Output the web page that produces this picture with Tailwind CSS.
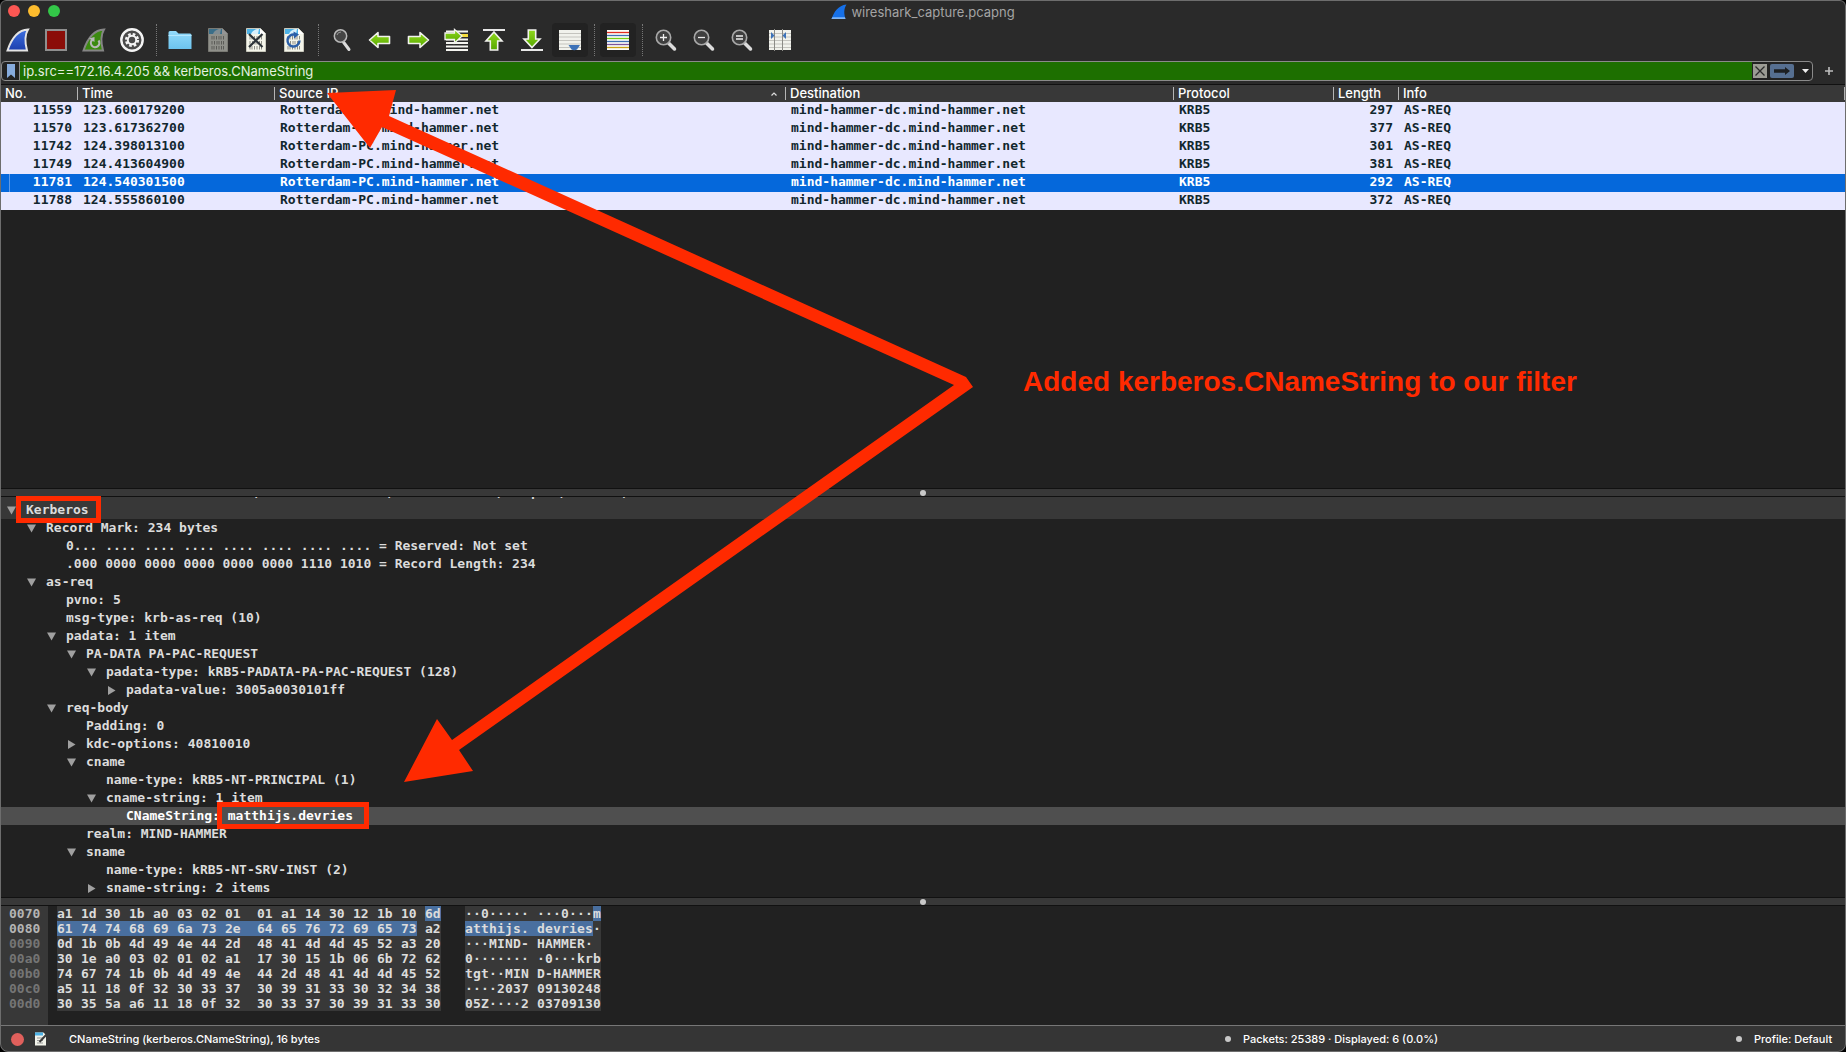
<!DOCTYPE html>
<html lang="en">
<head>
<meta charset="utf-8">
<title>wireshark_capture.pcapng</title>
<script src="https://cdn.jsdelivr.net/npm/@tailwindcss/browser@4"></script>
</head>
<body class="bg-black font-['Inter',sans-serif] text-[13px] leading-[18px] text-white">
<svg class="absolute size-0" aria-hidden="true">
  <defs>
    <linearGradient id="blue" x1="0" y1="0" x2="0" y2="1"><stop offset="0" stop-color="#3d6fe0"/><stop offset="1" stop-color="#1c3fae"/></linearGradient>
    <linearGradient id="lime" x1="0" y1="0" x2="0" y2="1"><stop offset="0" stop-color="#8fd81c"/><stop offset="1" stop-color="#57a800"/></linearGradient>
    <linearGradient id="folder" x1="0" y1="0" x2="0" y2="1"><stop offset="0" stop-color="#93dbfb"/><stop offset="1" stop-color="#6cc3ee"/></linearGradient>
    <symbol id="page" viewBox="0 0 24 24">
      <path d="M2.500 0.500h14L21.500 5.500V23.500h-19z" fill="#f4f5ea" stroke="#c9c9bd"/>
      <path d="M3 1h13.500v5H3z" fill="#4db2e6"/><path d="M7 6c1-3 4-5 8-5l-1 5z" fill="#d8f0fb"/>
      <path d="M16 0.500V6h5.500z" fill="#fff"/>
      <g fill="none" stroke="#8d8d85" stroke-width="1"><path d="M6 8v3.500M8 8v3.500M10.500 8v3.500M13 8v3.500M15 8v3.500M17.500 8v3.500M6 13v3.500M8.500 13v3.500M11 13v3.500M13 13v3.500M15.500 13v3.500M17.500 13v3.500M6 18v3.500M8 18v3.500M10.500 18v3.500M13 18v3.500M15.500 18v3.500M17.500 18v3.500"/></g>
    </symbol>
    <symbol id="lens" viewBox="0 0 24 24">
      <path d="M14 14.500l6.500 6.500" stroke="#dcdcdc" stroke-width="3.500" stroke-linecap="round"/>
      <circle cx="9.500" cy="9.500" r="7.200" fill="#3f3f3f" stroke="#a9a9a9" stroke-width="1.600"/>
    </symbol>
    <symbol id="arrow" viewBox="0 0 24 24">
      <path d="M1.500 12L10 4.500V8.500h11.500v7H10v4z" fill="url(#lime)" stroke="#f2f2ee" stroke-width="1.600" stroke-linejoin="round"/>
    </symbol>
  </defs>
</svg>

<div class="relative flex min-h-screen flex-col overflow-hidden rounded-b-lg rounded-t-md bg-[#2a2a2a]">

  <header class="relative flex h-6 items-center justify-center">
    <div class="absolute left-2 top-[5px] flex gap-2">
      <button aria-label="Close" class="size-3 rounded-full bg-[#fc5753]"></button>
      <button aria-label="Minimize" class="size-3 rounded-full bg-[#fdbc2e]"></button>
      <button aria-label="Zoom" class="size-3 rounded-full bg-[#33c748]"></button>
    </div>
    <svg class="mr-1 size-4" viewBox="0 0 16 16"><path d="M0.500 15C3 8 7 1.500 15.500 0.500 12.500 5 13 10 14.500 15z" fill="#1670e8"/><path d="M0.500 15h14l-.5-1.800H1.300z" fill="#7db4f7"/></svg>
    <h1 class="text-[#a4a4a4]">wireshark_capture.pcapng</h1>
  </header>

  <nav aria-label="Main toolbar" class="mb-[5px] flex h-8 items-center gap-0.5">
    <button aria-label="Start capture" class="flex h-[34px] w-9 items-center justify-center"><svg class="size-6" viewBox="0 0 24 24"><path d="M1.500 22.500C5 12 11 2 22 1.500 18 8 19 15 21 22.500z" fill="url(#blue)" stroke="#e4e4e4" stroke-width="2"/></svg></button>
    <button aria-label="Stop capture" class="flex h-[34px] w-9 items-center justify-center"><svg class="size-6" viewBox="0 0 24 24"><path d="M2 2h20v20H2z" fill="#8b0d08" stroke="#8f8f8f" stroke-width="2"/></svg></button>
    <button aria-label="Restart capture" class="flex h-[34px] w-9 items-center justify-center"><svg class="size-6" viewBox="0 0 24 24"><path d="M1.500 22.500C5 12 11 2 22 1.500 18 8 19 15 21 22.500z" fill="#3c8a10" stroke="#858585" stroke-width="2"/><path d="M16.500 12.500a4.200 4.200 0 1 1-6-.8" fill="none" stroke="#b9b9b9" stroke-width="2.200"/><path d="M7 10.500l5.500-1.500v5z" fill="#b9b9b9"/></svg></button>
    <button aria-label="Capture options" class="flex h-[34px] w-9 items-center justify-center"><svg class="size-6" viewBox="0 0 24 24"><circle cx="12" cy="12" r="10.700" fill="#4b4b4b" stroke="#f4f4f4" stroke-width="2.400"/><circle cx="12" cy="12" r="5.800" fill="none" stroke="#f4f4f4" stroke-width="2.600" stroke-dasharray="2.600 1.955"/><circle cx="12" cy="12" r="4.200" fill="#4b4b4b" stroke="#f4f4f4" stroke-width="2"/></svg></button>
    <div class="flex w-2 justify-center"><span class="h-8 border-l border-dotted border-[#777]"></span></div>
    <button aria-label="Open" class="flex h-[34px] w-9 items-center justify-center"><svg class="size-6" viewBox="0 0 24 24"><path d="M0.500 4.500q0-1.500 1.500-1.500h6l2.500 2.500H22q1.500 0 1.500 1.500v14H.5z" fill="url(#folder)"/><path d="M.5 7.500h23" stroke="#b4e8ff"/></svg></button>
    <button aria-label="Save" class="flex h-[34px] w-9 items-center justify-center opacity-50"><svg class="size-6"><use href="#page"/></svg></button>
    <button aria-label="Close file" class="flex h-[34px] w-9 items-center justify-center"><svg class="size-6" viewBox="0 0 24 24"><use href="#page"/><path d="M5 6l13.500 13M18.500 6L5 19" stroke="#2c3338" stroke-width="2.200"/></svg></button>
    <button aria-label="Reload" class="flex h-[34px] w-9 items-center justify-center"><svg class="size-6" viewBox="0 0 24 24"><use href="#page"/><path d="M17.500 12.500a6 6 0 1 1-4.500-5.800" fill="none" stroke="#2b5fa8" stroke-width="2.400"/><path d="M11.500 3.500l5.500 3-5 4z" fill="#2b5fa8"/></svg></button>
    <div class="flex w-2 justify-center"><span class="h-8 border-l border-dotted border-[#777]"></span></div>
    <button aria-label="Find packet" class="flex h-[34px] w-9 items-center justify-center"><svg class="size-6" viewBox="0 0 24 24"><path d="M13 13.500l6 8" stroke="#dcdcdc" stroke-width="3" stroke-linecap="round"/><circle cx="10.500" cy="8" r="6.200" fill="#454545" stroke="#b9b9b9" stroke-width="1.500"/><path d="M7 7a4 4 0 0 1 4-3" fill="none" stroke="#999"/></svg></button>
    <button aria-label="Previous packet" class="flex h-[34px] w-9 items-center justify-center"><svg class="size-6"><use href="#arrow"/></svg></button>
    <button aria-label="Next packet" class="flex h-[34px] w-9 items-center justify-center"><svg class="size-6 -scale-x-100"><use href="#arrow"/></svg></button>
    <button aria-label="Go to packet" class="flex h-[34px] w-9 items-center justify-center"><svg class="size-6" viewBox="0 0 24 24"><path d="M2 3.500h22M2 11.500h22M2 15h22M2 18.500h22M2 22h22" stroke="#f4f4f0" stroke-width="1.900"/><path d="M16 6h8v3h-8z" fill="#f6de3c"/><path d="M18 8L10.500 1.500V5H1v6.500h9.500V15z" fill="url(#lime)" stroke="#f2f2ee" stroke-width="1.300"/></svg></button>
    <button aria-label="First packet" class="flex h-[34px] w-9 items-center justify-center"><svg class="size-6" viewBox="0 0 24 24"><path d="M1 2h22" stroke="#e8e8e8" stroke-width="2"/><path d="M12 4l8 9h-4.300v9H8.300v-9H4z" fill="url(#lime)" stroke="#f2f2ee" stroke-width="1.600"/></svg></button>
    <button aria-label="Last packet" class="flex h-[34px] w-9 items-center justify-center"><svg class="size-6" viewBox="0 0 24 24"><path d="M1 22h22" stroke="#e8e8e8" stroke-width="2"/><path d="M12 19.500l8-8.500h-4.300V2H8.300v9H4z" fill="url(#lime)" stroke="#f2f2ee" stroke-width="1.600"/></svg></button>
    <button aria-label="Auto scroll" aria-pressed="true" class="flex h-[34px] w-9 items-center justify-center rounded-sm bg-[#222]"><svg class="size-6" viewBox="0 0 24 24"><path d="M1 2h22v20H1z" fill="#f1f2ec"/><path d="M1 5.500h22M1 9h22M1 12.500h22M1 16h22M1 19.500h22" stroke="#c4c4be"/><path d="M10.500 17h11.500l-3 4.500q-2.700 1.500-5.500 0z" fill="#3c72b8"/></svg></button>
    <div class="flex w-2 justify-center"><span class="h-8 border-l border-dotted border-[#777]"></span></div>
    <button aria-label="Colorize" aria-pressed="true" class="flex h-[34px] w-9 items-center justify-center rounded-sm bg-[#222]"><svg class="size-6" viewBox="0 0 24 24"><path d="M1 2h22v20H1z" fill="#fbfbf6"/><g stroke-width="1.300"><path d="M1 4.500h22" stroke="#e22c20"/><path d="M1 7.500h22" stroke="#3d6fb4"/><path d="M1 10.500h22" stroke="#74cc14"/><path d="M1 13.500h22" stroke="#3d6fb4"/><path d="M1 16.500h22" stroke="#7c549c"/><path d="M1 19.500h22" stroke="#c9a014"/></g></svg></button>
    <div class="flex w-2 justify-center"><span class="h-8 border-l border-dotted border-[#777]"></span></div>
    <button aria-label="Zoom in" class="flex h-[34px] w-9 items-center justify-center"><svg class="size-6" viewBox="0 0 24 24"><use href="#lens"/><path d="M6 9.500h7M9.500 6v7" stroke="#eee" stroke-width="1.300"/></svg></button>
    <button aria-label="Zoom out" class="flex h-[34px] w-9 items-center justify-center"><svg class="size-6" viewBox="0 0 24 24"><use href="#lens"/><path d="M6 9.500h7" stroke="#eee" stroke-width="1.300"/></svg></button>
    <button aria-label="Normal size" class="flex h-[34px] w-9 items-center justify-center"><svg class="size-6" viewBox="0 0 24 24"><use href="#lens"/><path d="M6 8h7M6 11h7" stroke="#eee" stroke-width="1.300"/></svg></button>
    <button aria-label="Resize columns" class="flex h-[34px] w-9 items-center justify-center"><svg class="size-6" viewBox="0 0 24 24"><path d="M1 2h22v20H1z" fill="#f1f2ec"/><path d="M1 5.500h22M1 9h22M1 12.500h22M1 16h22M1 19.500h22" stroke="#c4c4be"/><path d="M6.500 1v22M14.500 1v22" stroke="#8b8b86"/><path d="M3 4l3.500 3.500L3 11zM18 4l-3.500 3.500L18 11z" fill="#3c72b8"/></svg></button>
  </nav>

  <form class="flex h-5 items-center pl-px pr-2" onsubmit="return false">
    <div class="flex h-5 flex-1 items-stretch overflow-hidden rounded-sm border border-[#8a8a8a] bg-[#222]">
      <button type="button" aria-label="Filter bookmarks" class="flex w-[18px] items-center justify-center border-r border-[#8a8a8a]"><svg class="h-3.5 w-2" viewBox="0 0 8 14"><path d="M0 0h8v14L4 10.500 0 14z" fill="#86abdc"/></svg></button>
      <input aria-label="Display filter" value="ip.src==172.16.4.205 &amp;&amp; kerberos.CNameString" class="min-w-0 flex-1 bg-[#1d6f00] px-[3px] text-[13px] text-[#e4efe0] outline-none">
      <div class="flex items-center pr-[3px]">
        <button type="button" aria-label="Clear filter" class="ml-px size-[14px] bg-[#9b9b94]"><svg class="size-[14px]" viewBox="0 0 14 14"><path d="M2.500 2.500l9 9M11.500 2.500l-9 9" stroke="#2a2a2a" stroke-width="1.300"/></svg></button>
        <button type="submit" aria-label="Apply filter" class="ml-[3px] h-[14px] w-6 rounded-[2px] bg-[#566f91]"><svg class="h-[14px] w-6" viewBox="0 0 24 14"><path d="M4 5.200h11V3l5 4-5 4V8.800H4z" fill="#1d1f22"/></svg></button>
        <button type="button" aria-label="Filter history" class="flex h-[14px] w-[15px] items-center justify-end"><svg class="h-1 w-[7px]" viewBox="0 0 7 4"><path d="M0 0h7L3.500 4z" fill="#eee"/></svg></button>
      </div>
    </div>
    <button type="button" aria-label="Add filter button" class="ml-2.5 mr-[3px] flex w-3 justify-center"><svg class="size-2" viewBox="0 0 8 8"><path d="M0 4h8M4 0v8" stroke="#bdbdbd" stroke-width="1.600"/></svg></button>
  </form>

  <main class="mt-[3px] flex flex-1 flex-col border-t border-[#111]">
    <section aria-label="Packet list" class="flex-1 bg-[#212121]">
      <table class="w-full table-fixed border-collapse">
        <colgroup><col class="w-[77px]"><col class="w-[197px]"><col class="w-[511px]"><col class="w-[388px]"><col class="w-[160px]"><col class="w-[65px]"><col></colgroup>
        <thead>
          <tr class="h-[17px] bg-[#383838] text-left leading-[13px]">
            <th class="p-0 pl-[5px] font-medium">No.</th>
            <th class="p-0 font-medium"><div class="border-l border-[#b5b5b5] pl-1">Time</div></th>
            <th class="p-0 font-medium"><div class="flex items-center justify-between border-l border-[#b5b5b5] pl-1 pr-2">Source IP<svg class="h-1 w-1.5" viewBox="0 0 6 4"><path d="M.5 3.500L3 1l2.500 2.500" fill="none" stroke="#ddd" stroke-width="1.200"/></svg></div></th>
            <th class="p-0 font-medium"><div class="border-l border-[#b5b5b5] pl-1">Destination</div></th>
            <th class="p-0 font-medium"><div class="border-l border-[#b5b5b5] pl-1">Protocol</div></th>
            <th class="p-0 font-medium"><div class="border-l border-[#b5b5b5] pl-1">Length</div></th>
            <th class="p-0 pr-px font-medium"><div class="border-x border-[#b5b5b5] pl-1">Info</div></th>
          </tr>
        </thead>
        <tbody id="packets" class="bg-[#e8e8ff] font-['DejaVu_Sans_Mono',monospace] font-bold leading-4 text-[#12272e]"></tbody>
      </table>
    </section>

    <div class="flex h-[9px] items-center justify-center border-y border-[#111] bg-[#383838]"><span class="size-1.5 rounded-full bg-[#c8c8c8]"></span></div>

    <section aria-label="Packet details" class="bg-[#212121] font-['DejaVu_Sans_Mono',monospace] font-bold text-[#dcdcdc]">
      <div class="flex h-1 items-end overflow-hidden whitespace-pre bg-[#383838] pl-[26px]">Transmission Control Protocol, Src Port: 49187, Dst Port: 88, Seq: 1, Ack: 1, Len: 238</div>
      <ul id="tree"></ul>
    </section>

    <div class="flex h-[9px] items-center justify-center border-y border-[#111] bg-[#383838]"><span class="size-1.5 rounded-full bg-[#c8c8c8]"></span></div>

    <section aria-label="Packet bytes" class="flex bg-[#212121] font-['DejaVu_Sans_Mono',monospace] font-bold leading-[15px] text-[#dcdcdc]">
      <table class="border-collapse"><tbody id="bytes"></tbody></table>
    </section>
  </main>

  <footer class="flex h-[27px] items-center border-t border-[#777] bg-[#353535] pl-[11px] pr-[14px] text-[11px] font-medium">
    <button aria-label="Expert information" class="size-[13px] rounded-full bg-[#e0605c]"></button>
    <button aria-label="Capture comments" class="ml-2.5 size-[14px]"><svg class="size-[14px]" viewBox="0 0 14 14"><path d="M1 .5h8.500L12 3v10.500H1z" fill="#f2f3ea"/><path d="M1 .5h8v3H1z" fill="#4db2e6"/><path d="M3 6h6M3 8.500h6M3 11h6" stroke="#999"/><path d="M5.500 10L12.500 2.500" stroke="#3a3a3a" stroke-width="2"/></svg></button>
    <span class="ml-[21px] flex-1">CNameString (kerberos.CNameString), 16 bytes</span>
    <span class="size-1.5 rounded-full bg-[#c8c8c8]"></span>
    <span class="ml-3 w-[493px]">Packets: 25389 · Displayed: 6 (0.0%)</span>
    <span class="size-1.5 rounded-full bg-[#c8c8c8]"></span>
    <span class="ml-3 w-[78px] whitespace-nowrap">Profile: Default</span>
  </footer>

  <svg class="pointer-events-none absolute left-0 top-0" width="1000" height="800" viewBox="0 0 1000 800" aria-hidden="true"><path d="M327 93L396 90 389 116 966 377 973 387 459 750 473 771 404 782 437 719 452 740 954 385 382 127 370 148z" fill="#ff2a00"/></svg>
  <p class="absolute left-[1023px] top-[366px] whitespace-nowrap font-['Liberation_Sans',sans-serif] text-[28px] font-bold leading-8 text-[#ff2a00]">Added kerberos.CNameString to our filter</p>
  <div class="pointer-events-none absolute inset-0 z-20 rounded-b-lg rounded-t-md border border-[#6d6d6d]"></div>
</div>

<script>
const packets = [
  ['11559', '123.600179200', '297'],
  ['11570', '123.617362700', '377'],
  ['11742', '124.398013100', '301'],
  ['11749', '124.413604900', '381'],
  ['11781', '124.540301500', '292'],
  ['11788', '124.555860100', '372'],
];
document.getElementById('packets').innerHTML = packets.map(([no, time, len]) => `
  <tr class="h-[18px] ${no === '11781' ? 'bg-[#0568db] text-white' : ''}">
    <td class="p-0 pr-[5px] text-right align-top"><div class="${no === '11781' ? 'ml-[9px] h-[18px] border-l border-[#5f9be8]' : ''}">${no}</div></td>
    <td class="p-0 pl-[6px] align-top">${time}</td>
    <td class="p-0 pl-[6px] align-top">Rotterdam-PC.mind-hammer.net</td>
    <td class="p-0 pl-[6px] align-top">mind-hammer-dc.mind-hammer.net</td>
    <td class="p-0 pl-[6px] align-top">KRB5</td>
    <td class="p-0 pr-[5px] text-right align-top">${len}</td>
    <td class="p-0 pl-[6px] align-top">AS-REQ</td>
  </tr>`).join('');

// [depth, marker, text]: v = expanded, > = collapsed
const tree = [
  [0, 'v', 'Kerberos'],
  [1, 'v', 'Record Mark: 234 bytes'],
  [2, '', '0... .... .... .... .... .... .... .... = Reserved: Not set'],
  [2, '', '.000 0000 0000 0000 0000 0000 1110 1010 = Record Length: 234'],
  [1, 'v', 'as-req'],
  [2, '', 'pvno: 5'],
  [2, '', 'msg-type: krb-as-req (10)'],
  [2, 'v', 'padata: 1 item'],
  [3, 'v', 'PA-DATA PA-PAC-REQUEST'],
  [4, 'v', 'padata-type: kRB5-PADATA-PA-PAC-REQUEST (128)'],
  [5, '>', 'padata-value: 3005a0030101ff'],
  [2, 'v', 'req-body'],
  [3, '', 'Padding: 0'],
  [3, '>', 'kdc-options: 40810010'],
  [3, 'v', 'cname'],
  [4, '', 'name-type: kRB5-NT-PRINCIPAL (1)'],
  [4, 'v', 'cname-string: 1 item'],
  [5, '', 'CNameString: matthijs.devries'],
  [3, '', 'realm: MIND-HAMMER'],
  [3, 'v', 'sname'],
  [4, '', 'name-type: kRB5-NT-SRV-INST (2)'],
  [4, '>', 'sname-string: 2 items'],
];
const shapes = { 'v': 'M0 0.500h9L4.500 8.500z', '>': 'M1 0v9L8.500 4.500z', '': '' };
document.getElementById('tree').innerHTML = tree.map(([depth, mark, text]) => {
  let row = '', body = text;
  if (text === 'Kerberos') {
    row = 'bg-[#383838]';
    body = '<span class="relative">Kerberos<span class="absolute -bottom-[6px] -left-[10px] -right-[12px] -top-[6px] z-10 border-[5px] border-[#ff2a00]"></span></span>';
  }
  if (text.startsWith('CNameString')) {
    row = 'bg-[#4f4f4f] text-white';
    body = 'CNameString: <span class="relative">matthijs.devries<span class="absolute -bottom-[6px] -left-[11px] -right-[16px] -top-[6px] z-10 border-[5px] border-[#ff2a00]"></span></span>';
  }
  return `<li class="flex h-[18px] items-center whitespace-pre ${row}" style="padding-left:${7 + depth * 20}px"><svg class="mr-[10px] size-[9px]" viewBox="0 0 9 9"><path d="${shapes[mark]}" fill="#a0a0a0"/></svg><span>${body}</span></li>`;
}).join('');

// [offset, hex, left text, right text, first highlighted byte, end of highlight]
const bytes = [
  ['0070', 'a1 1d 30 1b a0 03 02 01 01 a1 14 30 12 1b 10 6d', '··0·····', '···0···m', 15, 16],
  ['0080', '61 74 74 68 69 6a 73 2e 64 65 76 72 69 65 73 a2', 'atthijs.', 'devries·', 0, 15],
  ['0090', '0d 1b 0b 4d 49 4e 44 2d 48 41 4d 4d 45 52 a3 20', '···MIND-', 'HAMMER· ', 0, 0],
  ['00a0', '30 1e a0 03 02 01 02 a1 17 30 15 1b 06 6b 72 62', '0·······', '·0···krb', 0, 0],
  ['00b0', '74 67 74 1b 0b 4d 49 4e 44 2d 48 41 4d 4d 45 52', 'tgt··MIN', 'D-HAMMER', 0, 0],
  ['00c0', 'a5 11 18 0f 32 30 33 37 30 39 31 33 30 32 34 38', '····2037', '09130248', 0, 0],
  ['00d0', '30 35 5a a6 11 18 0f 32 30 33 37 30 39 31 33 30', '05Z····2', '03709130', 0, 0],
];
document.getElementById('bytes').innerHTML = bytes.map(([off, hex, a, b, from, to], r) => {
  const cells = hex.split(' ').map((h, i) => {
    const width = i === 7 ? 'w-8' : i === 15 ? 'w-4' : 'w-6';
    const on = i >= from && i < to;
    const fill = on && i === to - 1 && i < 15 ? 'bg-linear-to-r from-[#496f9f] from-[16px] to-[#383838] to-[16px]' : on ? 'bg-[#496f9f]' : 'bg-[#383838]';
    return `<td class="p-0"><div class="${width} ${fill}">${h}</div></td>`;
  }).join('');
  const mark = (t, base) => t.split('').map((c, i) => `<span class="inline-block w-2 ${base + i >= from && base + i < to ? 'bg-[#496f9f]' : ''}">${c}</span>`).join('');
  const gap = from === 0 && to > 8 ? 'bg-[#496f9f]' : '';
  return `<tr class="h-[15px]"><th scope="row" class="bg-[#383838] p-0 pl-[9px] pr-[7px] text-left ${r < 2 ? 'text-[#b4b4b4]' : 'text-[#757575]'}"><div class="w-8">${off}</div></th><td class="w-[9px] p-0"></td>${cells}<td class="w-6 p-0"></td><td class="p-0"><div class="flex h-[15px] whitespace-pre bg-[#383838]"><span>${mark(a, 0)}</span><span class="w-2 ${gap}"></span><span>${mark(b, 8)}</span></div></td></tr>`;
}).join('') + '<tr class="h-[14px]"><th class="bg-[#383838] p-0"></th></tr>';
</script>
</body>
</html>
